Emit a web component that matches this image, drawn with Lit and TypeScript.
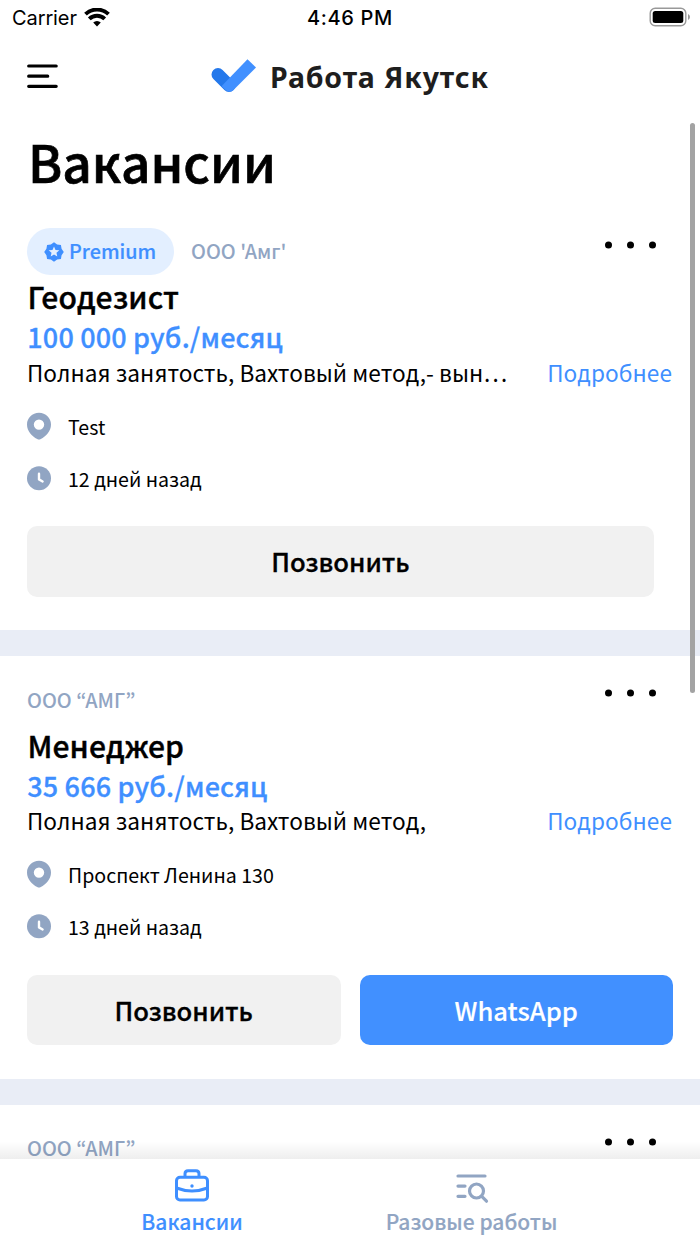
import { LitElement, html, css, nothing } from "lit";
import { customElement, property } from "lit/decorators.js";

interface Vacancy {
  company: string;
  premium?: boolean;
  title: string;
  salary: string;
  summary: string;
  place: string;
  date: string;
  whatsapp?: boolean;
}

const VACANCIES: Vacancy[] = [
  {
    company: "ООО 'Амг'",
    premium: true,
    title: "Геодезист",
    salary: "100 000 руб./месяц",
    summary: "Полная занятость, Вахтовый метод,- вын…",
    place: "Test",
    date: "12 дней назад",
  },
  {
    company: "ООО “АМГ”",
    title: "Менеджер",
    salary: "35 666 руб./месяц",
    summary: "Полная занятость, Вахтовый метод,",
    place: "Проспект Ленина 130",
    date: "13 дней назад",
    whatsapp: true,
  },
  {
    company: "ООО “АМГ”",
    title: "",
    salary: "",
    summary: "",
    place: "",
    date: "",
  },
];

// Eight-lobed badge outline with a star cut out of its middle.
const badgePath = (() => {
  const ring = (n: number, outer: number, inner: number) => {
    const pts: string[] = [];
    for (let i = 0; i < n * 2; i++) {
      const r = i % 2 ? inner : outer;
      const a = (Math.PI * i) / n - Math.PI / 2;
      pts.push(`${(10 + r * Math.cos(a)).toFixed(2)} ${(10 + r * Math.sin(a)).toFixed(2)}`);
    }
    return `M${pts.join("L")}Z`;
  };
  return ring(8, 9.8, 8.2) + ring(5, 5.6, 2.6);
})();

@customElement("vacancy-card")
export class VacancyCard extends LitElement {
  @property({ attribute: false }) item!: Vacancy;

  static styles = css`
    :host {
      display: block;
      flex: none;
      box-sizing: border-box;
      height: 448.4px;
      padding: 20.7px 27px 0;
      border-bottom: 26px solid #e9edf6;
    }
    .head {
      display: flex;
      align-items: center;
      height: 47px;
    }
    .pill {
      display: flex;
      align-items: center;
      box-sizing: border-box;
      width: 147px;
      height: 47px;
      margin-right: 17px;
      padding-left: 17px;
      border-radius: 24px;
      background: #e3efff;
      color: #3f8fff;
      gap: 5px;
    }
    .pill svg {
      width: 20px;
      height: 20px;
    }
    .pill span,
    .company {
      font-size: 19.8px;
      font-weight: 500;
      line-height: 28px;
      padding-bottom: 1px;
      white-space: pre;
    }
    .pill span {
      -webkit-text-stroke: 0.2px currentColor;
    }
    .company {
      flex: 1;
      color: #91a5c3;
    }
    .dots {
      width: 52px;
      height: 8px;
      margin: 0 16px 14px 0;
    }
    .title {
      height: 42px;
      line-height: 42.6px;
      padding-left: 0.5px;
      font-size: 30px;
      font-weight: 500;
      letter-spacing: 0.1px;
      -webkit-text-stroke: 0.4px currentColor;
    }
    .salary {
      height: 40.4px;
      line-height: 40.4px;
      padding-left: 0.3px;
      font-size: 27px;
      font-weight: 500;
      letter-spacing: 0.15px;
      color: #3f8fff;
      -webkit-text-stroke: 0.3px currentColor;
    }
    .summary {
      display: flex;
      justify-content: space-between;
      height: 29px;
      line-height: 30px;
      font-size: 22.6px;
      letter-spacing: 0.06px;
      white-space: pre;
      margin-bottom: 13.2px;
    }
    .more {
      color: #3f8fff;
      margin-right: 1px;
    }
    .row {
      display: flex;
      align-items: center;
      height: 52px;
      gap: 17px;
      font-size: 19.6px;
      line-height: 28px;
    }
    .row span {
      padding-top: 1.6px;
    }
    .row svg {
      width: 24px;
      height: 28px;
    }
    .actions {
      display: flex;
      gap: 19px;
      margin-top: 22.2px;
    }
    .actions.single {
      padding-right: 19px;
    }
    .btn {
      flex: 1;
      height: 70.6px;
      line-height: 70px;
      border-radius: 10px;
      background: #f1f1f1;
      text-align: center;
      font-size: 25.6px;
      font-weight: 500;
      -webkit-text-stroke: 0.3px currentColor;
    }
    .btn.primary {
      background: #4190ff;
      color: #fff;
      -webkit-text-stroke: 0.15px currentColor;
    }
  `;

  render() {
    const v = this.item;
    return html`
      <div class="head">
        ${v.premium
          ? html`<div class="pill">
              <svg viewBox="0 0 20 20">
                <path d=${badgePath} fill="#3f8fff" fill-rule="evenodd" />
              </svg>
              <span>Premium</span>
            </div>`
          : nothing}
        <div class="company">${v.company}</div>
        <svg class="dots" viewBox="0 0 52 8">
          <circle cx="3.5" cy="4" r="3.5" />
          <circle cx="25.5" cy="4" r="3.5" />
          <circle cx="47.5" cy="4" r="3.5" />
        </svg>
      </div>
      ${v.title
        ? html`
            <div class="title">${v.title}</div>
            <div class="salary">${v.salary}</div>
            <div class="summary"><span>${v.summary}</span><span class="more">Подробнее</span></div>
            <div class="row">
              <svg viewBox="0 0 24 28">
                <path
                  fill="#91a5c3"
                  fill-rule="evenodd"
                  d="M12 .7C5.3.7 0 6 0 12.400 0 19 5 24 10.200 27q1.800 1 3.600 0C19 24 24 19 24 12.400 24 6 18.700.7 12 .7ZM12 7.400a5.200 5.200 0 1 0 0 10.400 5.200 5.200 0 0 0 0-10.400Z"
                />
              </svg>
              <span>${v.place}</span>
            </div>
            <div class="row">
              <svg viewBox="0 0 24 28">
                <circle cx="12" cy="14.300" r="12" fill="#91a5c3" />
                <path d="M12 9.700v5.700l3.600 2.100" fill="none" stroke="#fff" stroke-width="2.400" stroke-linecap="round" stroke-linejoin="round" />
              </svg>
              <span>${v.date}</span>
            </div>
            <div class="actions ${v.whatsapp ? "" : "single"}">
              <div class="btn">Позвонить</div>
              ${v.whatsapp ? html`<div class="btn primary">WhatsApp</div>` : nothing}
            </div>
          `
        : nothing}
    `;
  }
}

@customElement("app-root")
export class AppRoot extends LitElement {
  static styles = css`
    :host {
      display: flex;
      flex-direction: column;
      position: relative;
      width: 700px;
      height: 1244px;
      overflow: hidden;
      background: #fff;
      color: #000;
      font-family: "Noto Sans CJK KR", "Noto Sans", sans-serif;
    }
    .status {
      display: grid;
      grid-template-columns: 1fr auto 1fr;
      align-items: center;
      height: 36px;
      padding: 0 9px 0 12px;
      font: 400 20px/24px Inter, sans-serif;
    }
    .carrier {
      display: flex;
      align-items: center;
      gap: 7px;
      letter-spacing: -0.1px;
    }
    .carrier svg {
      margin-bottom: 2px;
    }
    .time {
      font-weight: 500;
      letter-spacing: 0.65px;
      margin: 0 2px 0 -1px;
    }
    .battery {
      justify-self: end;
      margin-bottom: 2px;
    }
    .bar {
      display: grid;
      grid-template-columns: 184px auto 1fr;
      align-items: center;
      height: 82px;
      padding: 0 0 2px 27px;
      box-sizing: border-box;
    }
    .brand {
      display: flex;
      align-items: center;
      gap: 14px;
      color: #1e1e1e;
      font: 700 28.5px/36px "Noto Sans", sans-serif;
      letter-spacing: 0.85px;
      white-space: pre;
    }
    .brand span {
      padding-top: 2px;
    }
    h1 {
      margin: 0;
      padding-left: 28px;
      height: 89.8px;
      line-height: 86.4px;
      font-size: 51.4px;
      font-weight: 500;
      -webkit-text-stroke: 0.7px currentColor;
    }
    .list {
      flex: 1;
      min-height: 0;
      display: flex;
      flex-direction: column;
      overflow: hidden;
    }
    .tabs {
      position: relative;
      display: grid;
      grid-template-columns: 280px 279px;
      box-sizing: border-box;
      height: 85px;
      padding: 8px 0 0 52px;
      background: #fff;
      font-size: 21px;
      font-weight: 500;
      line-height: 28px;
      -webkit-text-stroke: 0.15px currentColor;
    }
    .tabs::before {
      content: "";
      position: absolute;
      left: 0;
      right: 0;
      bottom: 100%;
      height: 18px;
      background: linear-gradient(to top, rgba(0, 0, 0, 0.065), rgba(0, 0, 0, 0));
    }
    .tab {
      display: flex;
      flex-direction: column;
      align-items: center;
      gap: 2px;
      color: #91a5c3;
    }
    .tab.active {
      color: #3f8fff;
    }
    .thumb {
      position: absolute;
      left: 689.500px;
      top: 123px;
      width: 5.500px;
      height: 570px;
      border-radius: 3px;
      background: #a3a3a3;
    }
  `;

  render() {
    return html`
      <div class="status">
        <div class="carrier">
          <span>Carrier</span>
          <svg width="26" height="19" viewBox="0 0 26 19">
            <g fill="none" stroke="#000" stroke-width="3.900">
              <path d="M1.500 6.200a16.500 16.500 0 0 1 23 0" />
              <path d="M5.300 10.900a11 11 0 0 1 15.400 0" />
            </g>
            <path d="M9.200 14.600a5.400 5.400 0 0 1 7.600 0L13 18.500Z" />
          </svg>
        </div>
        <div class="time">4:46 PM</div>
        <svg class="battery" width="42" height="20" viewBox="0 0 42 20">
          <rect x="1.200" y="1.200" width="35.600" height="17.600" rx="5" fill="none" stroke="#999" stroke-width="1.400" />
          <rect x="3.700" y="3.900" width="30.600" height="12.200" rx="2.500" />
          <path d="M39 7q2 1 2 3t-2 3Z" fill="#999" />
        </svg>
      </div>
      <div class="bar">
        <svg width="32" height="26" viewBox="0 0 32 26">
          <path d="M1.700 3h27.500M1.700 13.200h19M1.700 23.300h27.500" stroke="#000" stroke-width="3.200" stroke-linecap="round" />
        </svg>
        <div class="brand">
          <svg width="45" height="34" viewBox="0 0 45 34">
            <path d="M7 15.500 18 26.500" stroke="#2478eb" stroke-width="13" stroke-linecap="round" />
            <path d="M36.500 .2 45 8.500 22.500 31Q18.500 34.500 14.500 31L10.500 27.300Z" fill="#4190ff" />
          </svg>
          <span>Работа Якутск</span>
        </div>
      </div>
      <h1>Вакансии</h1>
      <div class="list">${VACANCIES.map((v) => html`<vacancy-card .item=${v}></vacancy-card>`)}</div>
      <div class="tabs">
        <div class="tab active">
          <svg width="36" height="38" viewBox="0 0 36 38">
            <g fill="none" stroke="currentColor" stroke-width="3">
              <rect x="2.500" y="10.200" width="31" height="22.800" rx="3.500" />
              <path d="M11 10V6.700q0-3 3-3h8q3 0 3 3v3" />
              <path d="M2.500 21q15.500 6 31 0" />
            </g>
            <circle cx="18" cy="19" r="1.700" fill="currentColor" />
          </svg>
          <span>Вакансии</span>
        </div>
        <div class="tab">
          <svg width="34" height="38" viewBox="0 0 34 38">
            <g fill="none" stroke="currentColor" stroke-width="3.200" stroke-linecap="round">
              <path d="M3 9h27M3 19.100h7M3 29.300h7" />
              <circle cx="21.500" cy="24" r="7" />
              <path d="m27 29.700 4.500 4.500" />
            </g>
          </svg>
          <span>Разовые работы</span>
        </div>
      </div>
      <div class="thumb"></div>
    `;
  }
}
